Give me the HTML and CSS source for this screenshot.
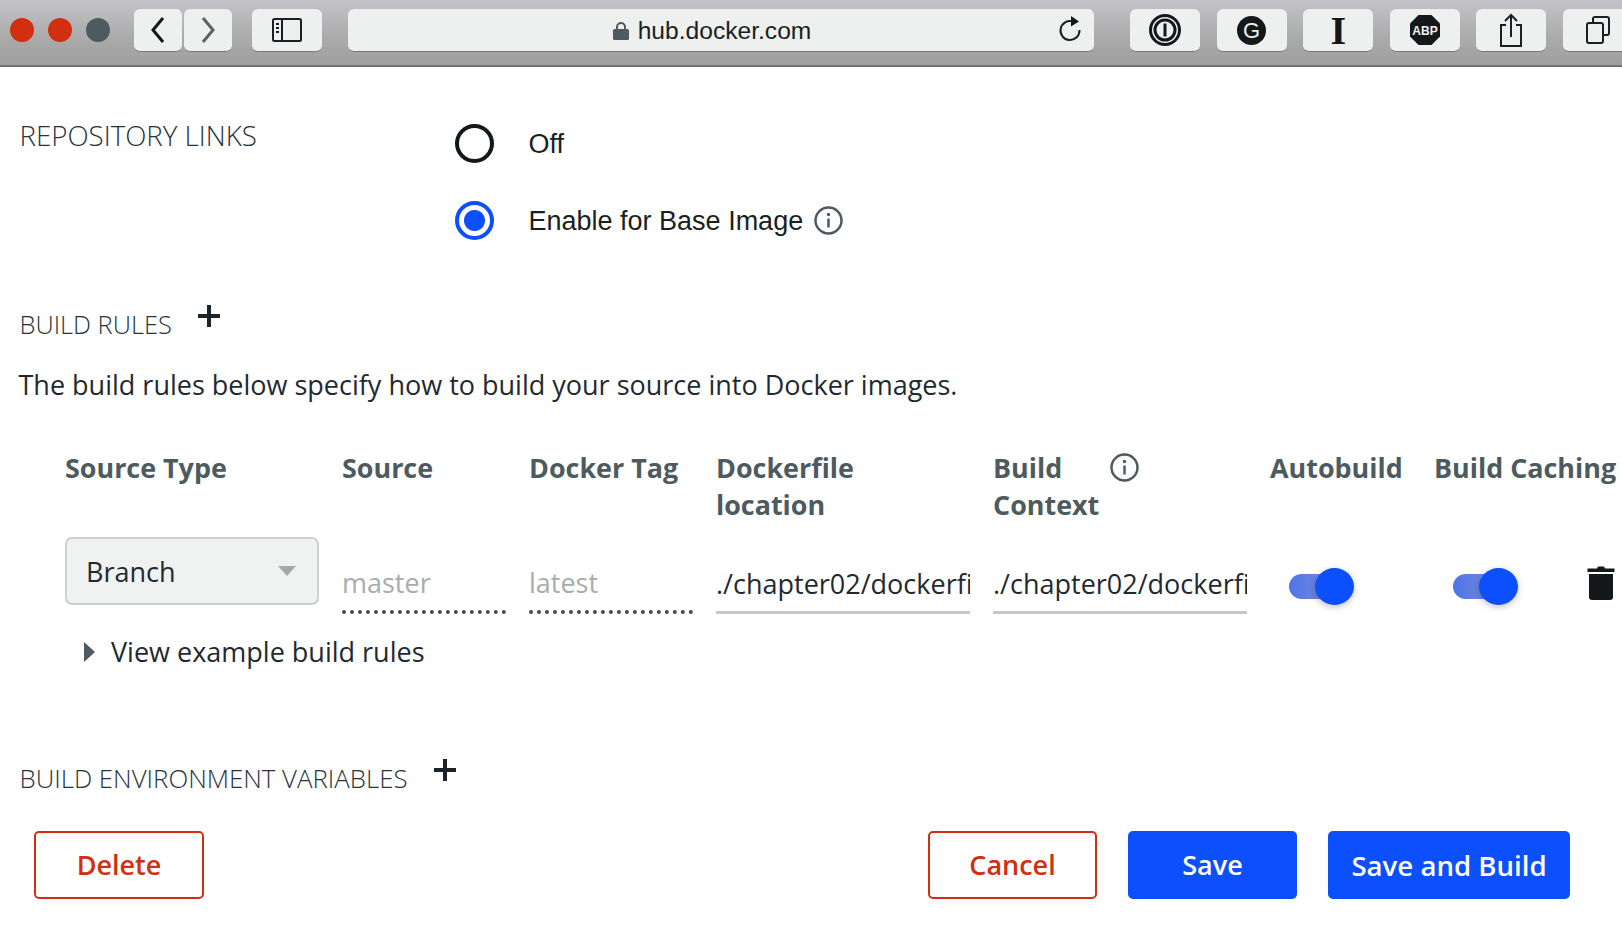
FILE: index.html
```html
<!DOCTYPE html>
<html lang="en">
<head>
<meta charset="utf-8">
<title>hub.docker.com</title>
<link rel="stylesheet" href="styles.css">
</head>
<body>
<header class="toolbar">
  <div class="lights"><span class="light red"></span><span class="light red"></span><span class="light grey"></span></div>
  <div class="nav">
    <div class="tb tb-nav"><svg width="18" height="28" viewBox="0 0 18 28"><path d="M14 2 4 14l10 12" class="stroke-dark"/></svg></div>
    <div class="tb tb-nav"><svg width="18" height="28" viewBox="0 0 18 28"><path d="M4 2l10 12L4 26" class="stroke-mid"/></svg></div>
  </div>
  <div class="tb tb-side"><svg width="30" height="24" viewBox="0 0 30 24"><rect x="1" y="1" width="28" height="22" rx="1.5" class="stroke-thin"/><path d="M10 1v22" class="stroke-thin"/><path d="M4 6h3M4 10h3M4 14h3" class="stroke-thin"/></svg></div>
  <div class="tb url">
    <span class="url-host"><svg width="16" height="20" viewBox="0 0 16 20"><path d="M4 9V6a4 4 0 0 1 8 0v3" class="lock-arc"/><rect y="8" width="16" height="11" rx="1.5" class="fill-slate"/></svg>hub.docker.com</span>
    <svg class="reload" width="24" height="28" viewBox="0 0 24 28"><path d="M15 6.500A9.500 9.500 0 1 0 21.500 15" class="stroke-thin"/><path d="M13 1l8 5.500-8 5z" class="fill-ink"/></svg>
  </div>
  <div class="exts">
    <div class="tb ext"><svg width="32" height="32" viewBox="0 0 32 32"><circle cx="16" cy="16" r="14.500" class="stroke-ink2"/><circle cx="16" cy="16" r="10" class="stroke-ink3"/><rect x="14.500" y="9.500" width="3" height="13" class="fill-ink"/></svg></div>
    <div class="tb ext"><span class="gram">G</span></div>
    <div class="tb ext"><span class="inst">I</span></div>
    <div class="tb ext"><svg width="32" height="32" viewBox="0 0 32 32"><path d="M9.500 1h13L31 9.500v13L22.500 31h-13L1 22.500v-13z" class="fill-ink"/><text x="16" y="21" class="abp">ABP</text></svg></div>
    <div class="tb ext"><svg width="24" height="34" viewBox="0 0 24 34"><path d="M7 12H2v21h20V12h-5M12 24V2M6 8l6-6 6 6" class="stroke-thin"/></svg></div>
    <div class="tb ext"><svg width="24" height="28" viewBox="0 0 24 28"><rect x="1" y="7" width="16" height="20" rx="2" class="stroke-thin"/><path d="M7 7V3a2 2 0 0 1 2-2h12a2 2 0 0 1 2 2v14a2 2 0 0 1-2 2h-4" class="stroke-thin"/></svg></div>
  </div>
</header>

<main class="page">
  <section class="repo">
    <h2 class="heading repo-title">REPOSITORY LINKS</h2>
    <div class="radios">
      <div class="radio-row"><span class="radio"></span><span class="radio-label">Off</span></div>
      <div class="radio-row"><span class="radio on"></span><span class="radio-label">Enable for Base Image</span>
        <svg class="info info-repo" width="29" height="29" viewBox="0 0 29 29"><circle cx="14.500" cy="14.500" r="13" class="stroke-info"/><path d="M14.500 12.500v9" class="stroke-info"/><circle cx="14.500" cy="8.500" r="1.700" class="fill-slate"/></svg>
      </div>
    </div>
  </section>

  <div class="heading-row rules-head">
    <h2 class="heading rules-title">BUILD RULES</h2>
    <svg class="plus" width="24" height="24" viewBox="0 0 24 24"><path d="M12 1v22M1 12h22" class="stroke-plus"/></svg>
  </div>
  <p class="desc">The build rules below specify how to build your source into Docker images.</p>

  <div class="rules">
    <div class="th">Source Type</div>
    <div class="th">Source</div>
    <div class="th">Docker Tag</div>
    <div class="th">Dockerfile<br>location</div>
    <div class="th th-info"><span class="th-text">Build Context</span>
      <svg class="info" width="29" height="29" viewBox="0 0 29 29"><circle cx="14.500" cy="14.500" r="13" class="stroke-info"/><path d="M14.500 12.500v9" class="stroke-info"/><circle cx="14.500" cy="8.500" r="1.700" class="fill-slate"/></svg>
    </div>
    <div class="th">Autobuild</div>
    <div class="th">Build Caching</div>

    <div class="select"><span>Branch</span><span class="caret"></span></div>
    <input class="field dotted" placeholder="master" aria-label="Source">
    <input class="field dotted" placeholder="latest" aria-label="Docker Tag">
    <input class="field solid" value="./chapter02/dockerfile" aria-label="Dockerfile location">
    <input class="field solid" value="./chapter02/dockerfile" aria-label="Build Context">
    <div class="toggle-cell"><span class="toggle"><span class="knob"></span></span></div>
    <div class="toggle-cell"><span class="toggle"><span class="knob"></span></span>
      <svg class="trash" width="28" height="34" viewBox="0 0 28 34"><path d="M10 2.500 11 .5h6l1 2h9.500v3.500H.5V2.500z" class="fill-ink"/><path d="M2 8h24v23a3 3 0 0 1-3 3H5a3 3 0 0 1-3-3z" class="fill-ink"/></svg>
    </div>
  </div>

  <div class="example"><span class="tri"></span>View example build rules</div>

  <div class="heading-row env-head">
    <h2 class="heading env-title">BUILD ENVIRONMENT VARIABLES</h2>
    <svg class="plus" width="24" height="24" viewBox="0 0 24 24"><path d="M12 1v22M1 12h22" class="stroke-plus"/></svg>
  </div>

  <footer class="actions">
    <button class="btn outline delete">Delete</button>
    <div class="actions-right">
      <button class="btn outline wide">Cancel</button>
      <button class="btn primary wide">Save</button>
      <button class="btn primary build">Save and Build</button>
    </div>
  </footer>
</main>
</body>
</html>
```
FILE: styles.css
```css
* { box-sizing: border-box; }
html, body { margin: 0; padding: 0; height: 100%; overflow: hidden; background: #fff; }
body { font-family: "Open Sans", "Liberation Sans", sans-serif; color: #27343b; }

.toolbar {
  height: 67px;
  display: flex;
  align-items: flex-start;
  padding-top: 9px;
  background: linear-gradient(#c3c3c8 0, #bdbdc1 10px, #a9a9a9 40px, #9f9f9f 100%);
  border-bottom: 2px solid #6f7173;
  overflow: hidden;
}
.lights { display: flex; gap: 14px; margin: 9px 0 0 10px; }
.light { width: 24px; height: 24px; border-radius: 50%; }
.light.red { background: #d22e10; }
.light.grey { background: #4d5b60; }
.tb {
  background: #eeefef;
  border-radius: 6px;
  border-bottom: 1px solid #77797c;
  height: 43px;
  display: flex;
  align-items: center;
  justify-content: center;
  flex: none;
}
.nav { display: flex; gap: 2px; margin-left: 24px; }
.tb-nav { width: 48px; }
.tb-side { width: 70px; margin-left: 20px; }
.url { width: 746px; margin-left: 26px; position: relative; }
.url-host { display: flex; align-items: center; gap: 9px; margin-right: 18px; padding-top: 1px; font: 24.600px "Liberation Sans", sans-serif; color: #1a1f22; }
.reload { position: absolute; right: 12px; top: 6px; }
.exts { display: flex; gap: 16.600px; margin-left: 36px; }
.ext { width: 70px; }
.gram { width: 29px; height: 29px; border-radius: 50%; background: #14181b; color: #eeefef; font: 22px/29px "Liberation Sans", sans-serif; text-align: center; }
.inst { font: bold 40px/43px "Liberation Serif", serif; color: #14181b; }
.abp { font: bold 12px "Liberation Sans", sans-serif; fill: #f2f2f2; text-anchor: middle; }

svg { display: block; flex: none; }
svg path, svg rect, svg circle { fill: none; }
.stroke-dark { stroke: #14181b; stroke-width: 3; }
.stroke-mid { stroke: #5a6367; stroke-width: 3; }
.stroke-thin { stroke: #1b2023; stroke-width: 2; }
.stroke-ink2 { stroke: #14181b; stroke-width: 3; }
.stroke-ink3 { stroke: #14181b; stroke-width: 3; }
.stroke-info { stroke: #4d5b60; stroke-width: 2.500; }
.stroke-plus { stroke: #1b2428; stroke-width: 4; }
.lock-arc { stroke: #4d5b60; stroke-width: 2; }
svg .fill-ink { fill: #14181b; }
svg .fill-slate { fill: #4d5b60; }

.page { display: block; }
.heading { margin: 0; line-height: 36px; font-weight: 300; color: #27343b; white-space: nowrap; }
.repo-title { font-size: 27.700px; }
.rules-title { font-size: 25.400px; }
.env-title { font-size: 25.800px; }

.repo { display: flex; padding: 38px 0 0 19.500px; }
.repo-title { width: 435px; margin-top: 11.500px; }
.radio-row { height: 77px; display: flex; align-items: center; }
.radio { width: 39px; height: 39px; border-radius: 50%; border: 4px solid #14181b; background: #fff; flex: none; }
.radio.on { border-color: #0c4ffc; background: radial-gradient(circle, #0c4ffc 0 10px, #fff 11px); }
.radio-label { margin-left: 35px; padding-top: 2px; font: 27px "Liberation Sans", sans-serif; color: #1a1f22; }
.info-repo { margin-left: 11px; }

.heading-row { display: flex; align-items: flex-start; padding-left: 19.500px; gap: 25px; }
.plus { margin-top: -2.500px; }
.rules-head { margin-top: 47px; }
.desc { margin: 25px 0 0 18.500px; font-size: 27px; line-height: 36px; font-weight: 400; color: #1f2a30; }

.rules {
  display: grid;
  grid-template-columns: 254px 164px 164px 254px 254px 141px 182px;
  column-gap: 23px;
  row-gap: 14px;
  margin: 47px 0 0 65px;
}
.th { font-size: 26.900px; line-height: 36.500px; font-weight: 700; color: #4d5b60; white-space: nowrap; }
.th-info { display: flex; align-items: flex-start; }
.th-text { width: 117px; white-space: normal; }
.th-info .info { margin-top: 3px; }

.select {
  height: 68px;
  background: #f0f1f1;
  border: 2px solid #cdd0d2;
  border-radius: 7px;
  padding: 0 20px 0 19px;
  display: flex;
  align-items: center;
  justify-content: space-between;
  font-size: 27px;
  color: #1f2a30;
}
.caret { width: 0; height: 0; border: 9px solid transparent; border-top: 10px solid #a5a9ab; border-bottom: 0; margin-right: 1px; }

.field {
  display: block;
  width: 100%;
  height: 77px;
  padding: 18px 0 0;
  border: 0;
  outline: 0;
  background: transparent;
  font-family: inherit;
  font-size: 27px;
  color: #1f2a30;
  line-height: 36px;
}
.field::placeholder { color: #a8acae; opacity: 1; }
.dotted { border-bottom: 4px dotted #3f4d54; }
.solid { border-bottom: 3px solid #c5c7ca; }

.toggle-cell { display: flex; align-items: flex-start; padding: 31px 0 0 19px; justify-content: space-between; }
.toggle { display: block; position: relative; width: 50px; height: 25px; margin-top: 6px; border-radius: 13px; background: linear-gradient(90deg, #4f74ea, #7d92d8); }
.knob { position: absolute; left: 26px; top: -6px; width: 39px; height: 37px; border-radius: 50%; background: #0c4ffc; box-shadow: 0 2px 7px rgba(0, 0, 0, .25); }
.trash { margin-top: -2px; margin-right: 1px; }

.example { display: flex; align-items: center; margin: 20px 0 0 84px; font-size: 27px; line-height: 36px; color: #1f2a30; }
.tri { width: 0; height: 0; border: 10px solid transparent; border-left: 11px solid #4d5b60; border-right: 0; margin-right: 16px; }

.env-head { margin-top: 90px; }

.actions { display: flex; justify-content: space-between; margin-top: 34.500px; padding: 0 52px 0 34px; }
.actions-right { display: flex; gap: 31px; }
.btn { height: 68px; border-radius: 5px; font-family: inherit; font-size: 27px; font-weight: 600; padding: 0; }
.delete { width: 170px; }
.wide { width: 169px; }
.build { width: 242px; font-size: 27.600px; }
.outline { background: #fff; border: 2px solid #d22e10; color: #d22e10; }
.primary { background: #0c4ffc; border: 0; color: #fff; }
```
